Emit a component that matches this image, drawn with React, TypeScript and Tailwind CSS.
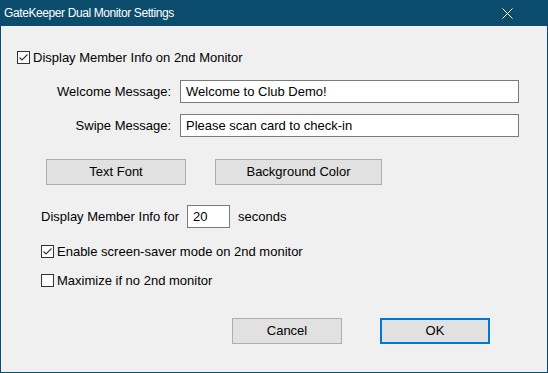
import React from 'react';

const font = { fontFamily: '"Liberation Sans", Arial, sans-serif' };

const CheckBox: React.FC<{ checked?: boolean; label: string }> = ({ checked, label }) => (
    <div className="flex items-center h-[15px]">
        <span className="w-[13px] h-[13px] border border-[#333333] bg-white flex items-center justify-center shrink-0">
            {checked && (
                <svg width="11" height="11" viewBox="0 0 11 11">
                    <path d="M1.5 5.5 L4 8 L9.5 2.5" fill="none" stroke="#333333" strokeWidth="1.1" />
                </svg>
            )}
        </span>
        <span className="ml-[3px] text-[13px] leading-none text-black whitespace-nowrap">{label}</span>
    </div>
);

const Button: React.FC<{ label: string; w: string; primary?: boolean }> = ({ label, w, primary }) => (
    <div
        className={`${w} h-[26px] bg-[#e1e1e1] flex items-center justify-center text-[13px] text-black ${
            primary ? 'border-2 border-[#0078d7]' : 'border border-[#adadad]'
        }`}
    >
        {label}
    </div>
);

const App: React.FC = () => {
    return (
        <div
            className="w-[548px] h-[373px] flex flex-col bg-[#0b4c6d] overflow-hidden select-none"
            style={font}
        >
            {/* Title bar */}
            <div className="h-[26px] flex items-center justify-between pl-[4px] pr-[35px] shrink-0">
                <span className="text-white text-[12px] tracking-[-0.4px]">GateKeeper Dual Monitor Settings</span>
                <svg width="11" height="11" viewBox="0 0 11 11">
                    <path d="M0.5 0.5 L10.5 10.5 M10.5 0.5 L0.5 10.5" stroke="#ffffff" strokeWidth="1" />
                </svg>
            </div>

            {/* Body */}
            <div className="flex-1 mx-[1px] mb-[1px] bg-[#f0f0f0] flex flex-col pl-[16px]">
                <div className="mt-[24px]">
                    <CheckBox checked label="Display Member Info on 2nd Monitor" />
                </div>

                <div className="mt-[15px] flex items-center">
                    <div className="w-[154px] text-right text-[13px] text-black">Welcome Message:</div>
                    <div className="ml-[9px] w-[339px] h-[23px] bg-white border border-[#7a7a7a] flex items-center pl-[5px] text-[13px] text-black">
                        Welcome to Club Demo!
                    </div>
                </div>

                <div className="mt-[11px] flex items-center">
                    <div className="w-[154px] text-right text-[13px] text-black">Swipe Message:</div>
                    <div className="ml-[9px] w-[339px] h-[23px] bg-white border border-[#7a7a7a] flex items-center pl-[5px] text-[13px] text-black">
                        Please scan card to check-in
                    </div>
                </div>

                <div className="mt-[22px] ml-[29px] flex gap-[29px]">
                    <Button label="Text Font" w="w-[140px]" />
                    <Button label="Background Color" w="w-[167px]" />
                </div>

                <div className="mt-[20px] ml-[24px] flex items-center">
                    <div className="w-[146px] text-[13px] text-black whitespace-nowrap">Display Member Info for</div>
                    <div className="w-[43px] h-[23px] bg-white border border-[#7a7a7a] flex items-center pl-[5px] text-[13px] text-black">
                        20
                    </div>
                    <div className="ml-[8px] text-[13px] text-black">seconds</div>
                </div>

                <div className="mt-[16px] ml-[24px]">
                    <CheckBox checked label="Enable screen-saver mode on 2nd monitor" />
                </div>

                <div className="mt-[14px] ml-[24px]">
                    <CheckBox label="Maximize if no 2nd monitor" />
                </div>

                <div className="mt-[30px] ml-[215px] flex gap-[38px]">
                    <Button label="Cancel" w="w-[110px]" />
                    <Button label="OK" w="w-[110px]" primary />
                </div>
            </div>
        </div>
    );
};

export default App;
